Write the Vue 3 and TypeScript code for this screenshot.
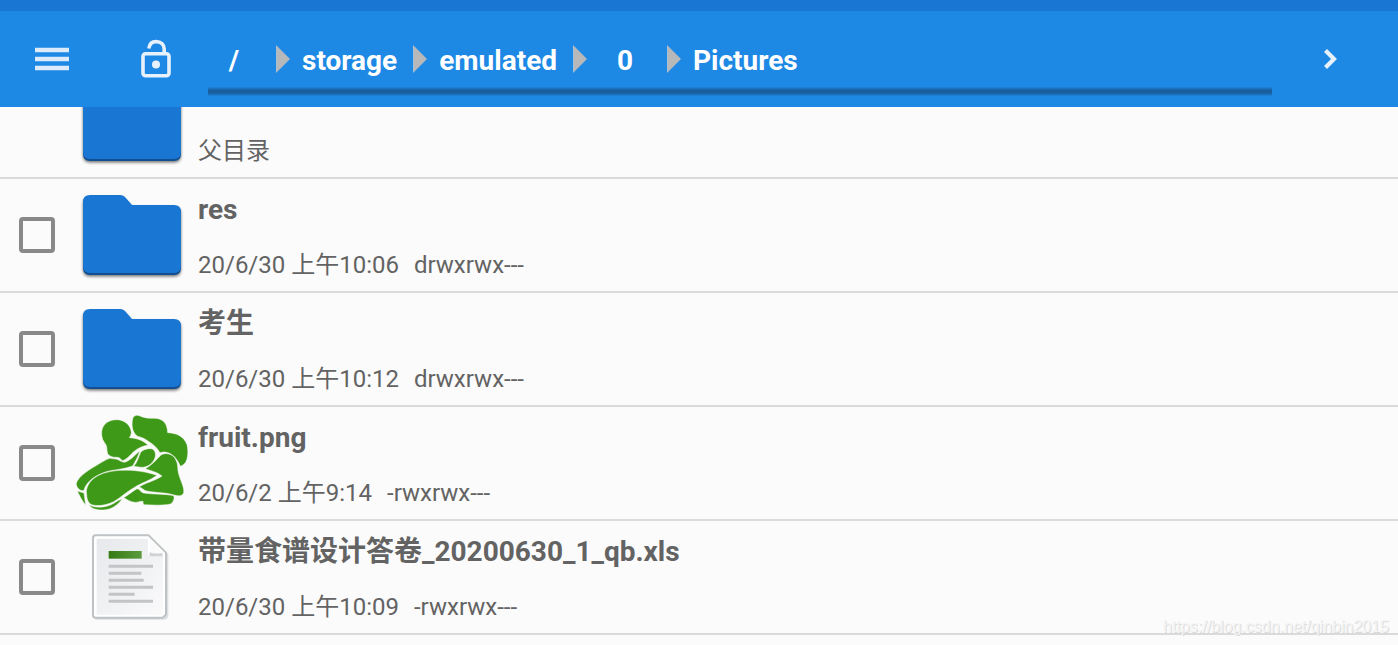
<script setup lang="ts">
import { ref } from 'vue'

type Kind = 'folder' | 'image' | 'sheet'

interface Entry {
  id: string
  name: string
  kind: Kind
  modified: string
  mode: string
}

const crumbs: string[] = ['/', 'storage', 'emulated', '0', 'Pictures']

const entries: Entry[] = [
  { id: 'res', name: 'res', kind: 'folder', modified: '20/6/30 上午10:06', mode: 'drwxrwx---' },
  { id: 'students', name: '考生', kind: 'folder', modified: '20/6/30 上午10:12', mode: 'drwxrwx---' },
  { id: 'fruit', name: 'fruit.png', kind: 'image', modified: '20/6/2 上午9:14', mode: '-rwxrwx---' },
  { id: 'sheet', name: '带量食谱设计答卷_20200630_1_qb.xls', kind: 'sheet', modified: '20/6/30 上午10:09', mode: '-rwxrwx---' },
]

const selected = ref<string[]>([])
</script>

<template>
  <div class="app">
    <header class="header">
      <button class="tool menu" type="button" aria-label="Menu">
        <svg width="40" height="40" viewBox="0 0 40 40">
          <path d="M3 11H37M3 20H37M3 29H37" fill="none" stroke="#dcebfb" stroke-width="4.6" />
        </svg>
      </button>
      <button class="tool lock" type="button" aria-label="Unlocked">
        <svg width="40" height="40" viewBox="0 0 40 40" fill="none" stroke="#e6f1fc">
          <rect x="7" y="14.8" width="26" height="22" rx="2.5" stroke-width="3.6" />
          <path d="M12.8 9.5C13.5 4.8 16 2.6 20 2.6C25 2.6 28.2 5.7 28.2 10V14" stroke-width="3.6" />
          <circle cx="20" cy="25.5" r="4" fill="#e6f1fc" stroke="none" />
        </svg>
      </button>
      <nav class="path" aria-label="Path">
        <template v-for="(crumb, i) in crumbs" :key="crumb">
          <svg v-if="i > 0" class="arrow" width="14" height="28" viewBox="0 0 14 28">
            <path d="M0 0L14 14L0 28Z" fill="#b6b8ba" />
            <path d="M.5 1V27" stroke="#a9bfd3" stroke-width="1" />
          </svg>
          <button class="crumb" type="button"><span class="crumb-text">{{ crumb }}</span></button>
        </template>
      </nav>
      <button class="tool next" type="button" aria-label="Next">
        <svg width="40" height="40" viewBox="0 0 40 40">
          <path d="M15.5 11.5L24 20L15.5 28.5" fill="none" stroke="#e6f1fc" stroke-width="4.2" />
        </svg>
      </button>
    </header>

    <svg class="defs" width="0" height="0" aria-hidden="true">
      <defs>
        <filter id="drop" x="-10%" y="-10%" width="120%" height="125%">
          <feGaussianBlur stdDeviation="1.5" />
        </filter>
        <linearGradient id="paper" x1="0" y1="0" x2="1" y2="1">
          <stop offset="0" stop-color="#e6e8eb" />
          <stop offset="1" stop-color="#fafafb" />
        </linearGradient>
        <linearGradient id="bar" x1="0" y1="0" x2="1" y2="0">
          <stop offset="0" stop-color="#357a12" />
          <stop offset="1" stop-color="#5b9b3d" />
        </linearGradient>
        <symbol id="folder" viewBox="0 0 112 112">
          <path d="M14 18.500H46L56 28H98Q105 28 105 35V90Q105 97.500 98 97.500H14Q7 97.500 7 90V25Q7 18.500 14 18.500Z" fill="#000" opacity=".55" filter="url(#drop)" />
          <path d="M14 17H46L56 27H98Q105 27 105 34V89Q105 96 98 96H14Q7 96 7 89V24Q7 17 14 17Z" fill="#124f91" />
          <path d="M14 16H44Q47 16 49 18L56 26H98Q105 26 105 33V87Q105 94 98 94H14Q7 94 7 87V23Q7 16 14 16Z" fill="#1976d2" />
        </symbol>
      </defs>
    </svg>

    <ul class="list">
      <li class="row parent">
        <span class="box-space"></span>
        <svg class="icon" width="112" height="112"><use href="#folder" /></svg>
        <div class="info"><p class="meta">父目录</p></div>
      </li>
      <li v-for="entry in entries" :key="entry.id" class="row">
        <input :id="entry.id" v-model="selected" class="box" type="checkbox" :value="entry.id" />
        <svg v-if="entry.kind === 'folder'" class="icon" width="112" height="112"><use href="#folder" /></svg>
        <svg v-else-if="entry.kind === 'image'" class="icon" width="112" height="112" viewBox="48 3 336 336" fill="#3f9918" stroke="#fbfbfb" stroke-width="1.5">
          <path d="M218 38C222 28 230 26 240 30C252 36 266 37 280 37C302 36 322 46 323 80C352 81 372 92 381 116C386 138 383 160 376 170Q370 178 361 181C354 164 341 143 319 139C310 137 305 139 300 140C292 127 282 116 268 108C256 99 246 94 233 91C219 82 213 62 218 38Z" />
          <path d="M125 88C122 58 142 41 171 41C196 42 213 59 214 80Q213 89 208 95C230 96 249 103 264 117C240 122 226 132 215 143C205 153 197 162 187 164C180 158 179 153 169 154C157 154 149 151 143 143C139 130 143 120 134 111Q126 101 125 88Z" />
          <path d="M221 181C231 171 235 155 242 139C250 129 268 126 277 129C287 134 289 148 283 160C275 177 258 184 246 184C237 184 229 182 221 181Z" />
          <path d="M66 254C57 252 48 243 49 232C57 210 80 196 105 181C122 171 136 161 149 157C158 158 165 159 171 160C178 163 184 168 193 169C209 165 223 149 239 135C237 147 226 166 218 180C193 189 172 190 147 195C119 202 93 216 79 237Q73 246 72 253Z" />
          <path d="M80 265C76 246 88 226 106 214C124 201 151 195 181 193C220 191 260 197 291 208C270 224 244 231 225 243C202 256 183 274 161 287C139 298 108 303 91 294Q80 286 80 265Z" />
          <path d="M256 188C275 177 290 161 303 147C318 138 342 144 348 163C356 177 351 190 357 207C361 223 374 245 371 260C367 272 352 270 343 267C318 259 290 261 260 255C251 253 246 245 237 243C257 230 280 227 306 210C292 198 272 194 256 188Z" />
          <path d="M191 275C206 267 217 256 231 248C242 250 241 259 251 261C281 266 316 263 341 269C345 280 338 292 328 295C307 299 279 297 253 296Q248 295 249 286C238 285 235 290 224 289C212 288 202 281 191 275Z" />
          <path d="M52 255L72 261C74 273 75 285 77 298C67 286 59 270 52 255Z" />
          <path d="M87 296C108 308 142 305 163 291Q175 282 187 278C178 291 165 303 148 309C128 315 97 313 87 296Z" />
        </svg>
        <svg v-else class="icon" width="112" height="112" viewBox="48 3 336 336">
          <path d="M106 50H268L325 102V288Q322 299 312 299H106Z" fill="#dcdee0" />
          <path d="M107 46H266L318 98V283L308 293H107Q99 293 99 285V54Q99 46 107 46Z" fill="#fff" stroke="#bfc2c5" stroke-width="6" stroke-linejoin="round" />
          <path d="M110 56H264V104H309V284H110Z" fill="url(#paper)" />
          <path d="M265 52L313 103Q290 101 272 106Q272 76 265 52Z" fill="#fafafa" />
          <path d="M268 97Q284 103 307 99V109H270Z" fill="#cfd1d3" />
          <rect x="146" y="93" width="99" height="23" fill="url(#bar)" />
          <path d="M146 139H279M146 160H244M146 181H251M146 202H279M146 223H224M146 244H279" fill="none" stroke="#c3c4c6" stroke-width="9" />
        </svg>
        <div class="info">
          <label class="name" :for="entry.id">{{ entry.name }}</label>
          <p class="meta"><span>{{ entry.modified }}</span><span>{{ entry.mode }}</span></p>
        </div>
      </li>
    </ul>

    <p class="watermark">https://blog.csdn.net/qinbin2015</p>
  </div>
</template>

<style>
body {
  margin: 0;
  background: #fbfbfb;
}
</style>

<style scoped>
.app {
  position: relative;
  min-height: 100vh;
  overflow: hidden;
  background: #fbfbfb;
  color: #636363;
  font-family: Roboto, "Noto Sans CJK SC", sans-serif;
}

.header {
  display: flex;
  align-items: center;
  height: 96px;
  border-top: 11px solid #1976d2;
  background: #1e88e5;
}

button {
  margin: 0;
  padding: 0;
  border: 0;
  background: none;
  color: #fff;
  font: inherit;
  cursor: pointer;
}

.tool {
  display: flex;
  justify-content: center;
  align-items: center;
  flex: none;
  width: 104px;
  height: 96px;
}

.next {
  width: 116px;
  margin-right: 10px;
}

.path {
  display: flex;
  align-items: center;
  flex: 1;
  height: 96px;
  min-width: 0;
  background: linear-gradient(#1e88e5, #1a69ae 2px, #175d9c 4px, #175d9c 5px, #1a69ae 7px, #1e88e5) 0 76px / 100% 9px no-repeat;
}

.arrow {
  flex: none;
}

.crumb {
  padding: 4px 16px 0 12px;
  font-size: 28px;
  font-weight: 700;
  line-height: 40px;
}

.crumb:first-child {
  padding-left: 0;
}

.crumb-text {
  display: block;
  min-width: 52px;
  text-align: center;
}

.defs {
  position: absolute;
}

.list {
  margin: 0;
  padding: 0;
  list-style: none;
}

.row {
  display: flex;
  align-items: center;
  height: 112px;
  padding-left: 19px;
  border-bottom: 2px solid #dadada;
}

.parent {
  align-items: flex-end;
  height: 70px;
  overflow: hidden;
}

.box,
.box-space {
  flex: none;
  box-sizing: border-box;
  width: 36px;
  height: 36px;
  margin: 0 21px 0 0;
}

.box {
  appearance: none;
  border: 4px solid #898989;
  border-radius: 4px;
}

.box:checked {
  background: #1976d2;
}

.icon {
  display: block;
  flex: none;
}

.info {
  display: flex;
  flex-direction: column;
  gap: 19px;
  min-width: 0;
  padding: 1px 10px 0;
}

.parent .info {
  padding-bottom: 10px;
}

.name {
  font-size: 28px;
  font-weight: 700;
  line-height: 40px;
}

.meta {
  display: flex;
  gap: 15px;
  margin: 0;
  font-size: 24px;
  line-height: 32px;
}

.watermark {
  position: absolute;
  right: 9px;
  bottom: 8px;
  margin: 0;
  color: #f4f4f4;
  font-family: "Liberation Sans", Arial, sans-serif;
  font-size: 16px;
  line-height: 20px;
  text-shadow: 1px 1px 0 #dcdcdc;
}
</style>
